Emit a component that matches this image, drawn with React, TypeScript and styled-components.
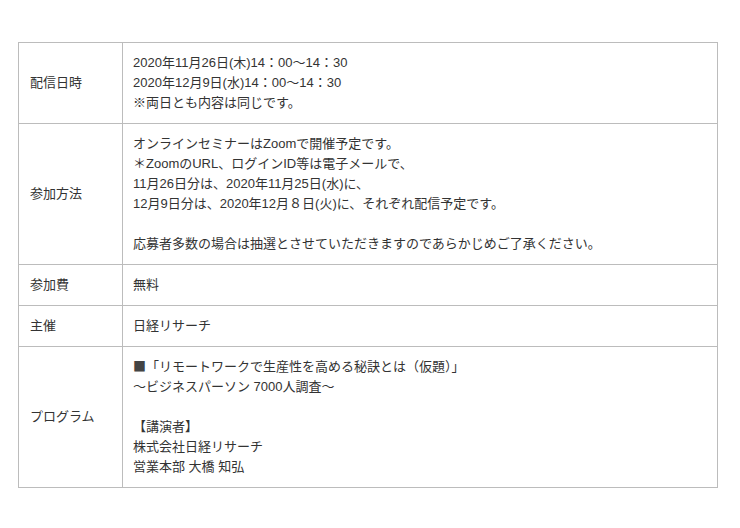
import React from "react";
import styled, { createGlobalStyle } from "styled-components";

const GlobalStyle = createGlobalStyle`
  html, body {
    margin: 0;
    padding: 0;
    background: #fff;
  }
  body {
    font-family: "Liberation Sans", "Noto Sans CJK JP", sans-serif;
    color: #333;
  }
`;

interface Row {
  label: string;
  lines: React.ReactNode[];
}

const Mark = styled.span`
  font-family: "Noto Sans CJK JP", sans-serif;
  line-height: 1;
  color: #444;
`;

const rows: Row[] = [
  {
    label: "配信日時",
    lines: [
      "2020年11月26日(木)14：00〜14：30",
      "2020年12月9日(水)14：00〜14：30",
      "※両日とも内容は同じです。",
    ],
  },
  {
    label: "参加方法",
    lines: [
      "オンラインセミナーはZoomで開催予定です。",
      "＊ZoomのURL、ログインID等は電子メールで、",
      "11月26日分は、2020年11月25日(水)に、",
      "12月9日分は、2020年12月８日(火)に、それぞれ配信予定です。",
      "",
      "応募者多数の場合は抽選とさせていただきますのであらかじめご了承ください。",
    ],
  },
  { label: "参加費", lines: ["無料"] },
  { label: "主催", lines: ["日経リサーチ"] },
  {
    label: "プログラム",
    lines: [
      <>
        <Mark>■</Mark>「リモートワークで生産性を高める秘訣とは（仮題）」
      </>,
      "〜ビジネスパーソン 7000人調査〜",
      "",
      "【講演者】",
      "株式会社日経リサーチ",
      "営業本部 大橋 知弘",
    ],
  },
];

const Page = styled.div`
  padding: 42px 0 0 18px;
`;

const Table = styled.table`
  width: 700px;
  border-collapse: collapse;
  font-size: 13px;
  line-height: 20px;
`;

const LabelCell = styled.th`
  width: 82px;
  border: 1px solid #bcbcbc;
  padding: 10px 10px 10px 11px;
  text-align: left;
  font-weight: normal;
  vertical-align: middle;
`;

const ValueCell = styled.td`
  border: 1px solid #bcbcbc;
  padding: 10px;
  text-align: left;
  vertical-align: top;
`;

const Line = styled.div`
  height: 20px;
  white-space: nowrap;
`;

export default function App() {
  return (
    <>
      <GlobalStyle />
      <Page>
        <Table>
          <tbody>
            {rows.map((row) => (
              <tr key={row.label}>
                <LabelCell>{row.label}</LabelCell>
                <ValueCell>
                  {row.lines.map((line, i) => (
                    <Line key={i}>{line}</Line>
                  ))}
                </ValueCell>
              </tr>
            ))}
          </tbody>
        </Table>
      </Page>
    </>
  );
}
